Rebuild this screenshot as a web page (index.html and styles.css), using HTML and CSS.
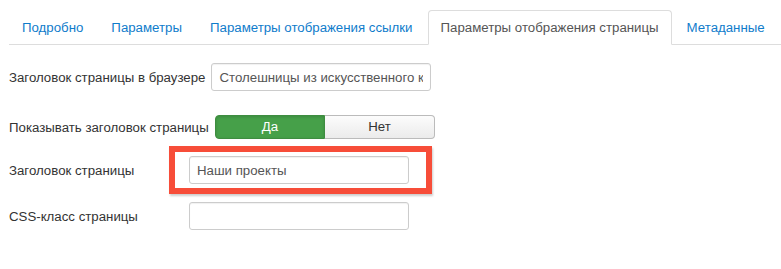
FILE: index.html
```html
<html>
    <head>
        <title>Параметры отображения страницы</title>
        <link rel="stylesheet" href="styles.css">
    </head>
    <body>
        <ul class="nav-tabs">
            <li><a href="#">Подробно</a></li>
            <li><a href="#">Параметры</a></li>
            <li><a href="#">Параметры отображения ссылки</a></li>
            <li class="active"><a href="#">Параметры отображения страницы</a></li>
            <li><a href="#">Метаданные</a></li>
        </ul>
        <form class="form-horizontal">
            <div class="control-group first">
                <label class="control-label">Заголовок страницы в браузере</label>
                <input class="text-input" type="text" value="Столешницы из искусственного камня">
            </div>
            <div class="control-group second">
                <label class="control-label">Показывать заголовок страницы</label>
                <div class="btn-group">
                    <span class="btn btn-yes">Да</span>
                    <span class="btn btn-no">Нет</span>
                </div>
            </div>
            <div class="control-group third">
                <label class="control-label">Заголовок страницы</label>
                <div class="highlight">
                    <input class="text-input" type="text" value="Наши проекты">
                    <span class="highlight-frame"></span>
                </div>
            </div>
            <div class="control-group">
                <label class="control-label">CSS-класс страницы</label>
                <input class="text-input" type="text" value="">
            </div>
        </form>
    </body>
</html>
```

FILE: styles.css
```css
body{
    margin: 0;
    padding: 10px 0 0 9px;
    background: #fff;
    color: #333;
    font-family: "Liberation Sans", Arial, sans-serif;
    font-size: 13.25px;
}

.nav-tabs{
    display: flex;
    list-style: none;
    margin: 0 0 18px 0;
    padding: 0;
    border-bottom: 1px solid #ddd;
}
.nav-tabs li{
    margin-bottom: -1px;
}
.nav-tabs a{
    display: block;
    padding: 8px 12px;
    line-height: 17px;
    margin-right: 2px;
    border: 1px solid transparent;
    border-radius: 4px 4px 0 0;
    color: #0f7ccb;
    text-decoration: none;
}
.nav-tabs .active a{
    background: #fff;
    color: #555;
    border-color: #ddd #ddd transparent;
}

.control-group{
    display: flex;
    align-items: center;
}
.control-group.first{
    margin-bottom: 24px;
}
.control-group.second{
    margin-bottom: 17px;
}
.control-group.third{
    margin-bottom: 18px;
}
.control-label{
    min-width: 180px;
    box-sizing: border-box;
    padding-right: 6px;
    color: #333;
}

.text-input{
    box-sizing: border-box;
    width: 220px;
    height: 28px;
    padding: 4px 7px;
    border: 1px solid #ccc;
    border-radius: 3px;
    box-shadow: inset 0 1px 1px rgba(0,0,0,0.06);
    font-family: inherit;
    font-size: 13.25px;
    color: #555;
    outline: none;
}

.btn-group{
    display: flex;
    width: 220px;
}
.btn{
    flex: 1;
    height: 24px;
    line-height: 22px;
    box-sizing: border-box;
    text-align: center;
    font-size: 13.25px;
}
.btn-yes{
    background: #46a049;
    color: #fff;
    border: 1px solid #3e8d40;
    border-radius: 4px 0 0 4px;
    box-shadow: inset 0 1px 3px rgba(0,0,0,0.15);
}
.btn-no{
    background: linear-gradient(#fcfcfc, #ebebeb);
    color: #333;
    border: 1px solid #bbb;
    border-left: none;
    border-radius: 0 4px 4px 0;
}

.highlight{
    position: relative;
}
.highlight-frame{
    position: absolute;
    left: -20px;
    right: -23px;
    top: -10px;
    bottom: -10px;
    border: 6px solid #f74d39;
    box-shadow: 1px 2px 2px rgba(0,0,0,0.2);
}
```
